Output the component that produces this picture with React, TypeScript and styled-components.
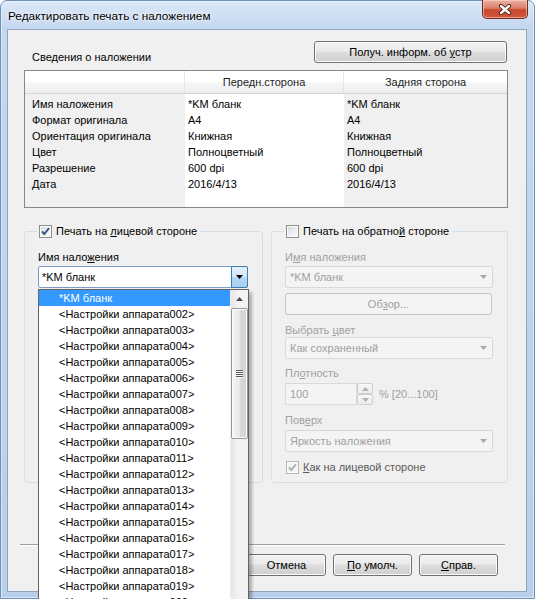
import React from "react";
import styled, { createGlobalStyle } from "styled-components";

const font = `"Liberation Sans", Arial, sans-serif`;
const grayText = "#a0a0a0";

const GlobalStyle = createGlobalStyle`
  html, body {
    margin: 0;
    padding: 0;
    width: 535px;
    height: 599px;
    overflow: hidden;
    background: #ffffff;
  }
  body {
    font-family: ${font};
    font-size: 11px;
    color: #000;
  }
  #root {
    width: 535px;
    height: 599px;
  }
`;

const Window = styled.div`
  width: 535px;
  height: 599px;
  box-sizing: border-box;
  border: 1px solid #6f8fb8;
  border-radius: 7px 7px 0 0;
  background: linear-gradient(to bottom, #dbe8f7 0px, #c4d8f0 26px, #b8cfeb 100%);
  box-shadow: inset 0 0 0 1px rgba(255, 255, 255, 0.45);
  display: flex;
  flex-direction: column;
  padding: 0 7px 6px 6px;
`;

const TitleBar = styled.div`
  height: 28px;
  display: flex;
  align-items: center;
  flex-shrink: 0;
`;

const Title = styled.div`
  padding-left: 1px;
  margin-top: 1px;
  font-size: 11.8px;
  color: #000;
  text-shadow: 0 0 6px #fff, 0 0 3px #fff;
`;

const CloseButton = styled.div`
  margin-left: auto;
  margin-right: -1px;
  align-self: flex-start;
  margin-top: -1px;
  width: 46px;
  height: 19px;
  box-sizing: border-box;
  border: 1px solid #6e2a1c;
  border-top: none;
  border-radius: 0 0 5px 5px;
  background: linear-gradient(to bottom, #eab2a2 0%, #dc7f69 45%, #c8472d 55%, #d0573b 100%);
  box-shadow: inset 0 0 0 1px rgba(255, 220, 210, 0.55);
  display: flex;
  align-items: center;
  justify-content: center;
`;

const Client = styled.div`
  flex: 1;
  background: #f0f0f0;
  border: 1px solid #8ea5c0;
  padding: 0 18px 0 16px;
  display: flex;
  flex-direction: column;
`;

const InfoRow = styled.div`
  display: flex;
  justify-content: space-between;
  margin-top: 11px;
`;

const InfoLabel = styled.div`
  margin-top: 9px;
  padding-left: 8px;
  line-height: 14px;
`;

const Button = styled.div<{ $width: number; $disabled?: boolean }>`
  width: ${(p) => p.$width}px;
  height: 22px;
  box-sizing: border-box;
  border: 1px solid ${(p) => (p.$disabled ? "#c4c4c4" : "#707070")};
  border-radius: 3px;
  background: ${(p) =>
    p.$disabled
      ? "#f4f4f4"
      : "linear-gradient(to bottom, #f2f2f2 0%, #ebebeb 45%, #dddddd 50%, #cfcfcf 100%)"};
  box-shadow: inset 0 0 0 1px ${(p) => (p.$disabled ? "#f4f4f4" : "#fbfbfb")};
  color: ${(p) => (p.$disabled ? grayText : "#000")};
  display: flex;
  align-items: center;
  justify-content: center;
  flex-shrink: 0;
`;

const Mn = styled.span`
  text-decoration: underline;
  text-underline-offset: 1px;
`;

const Table = styled.div`
  margin-top: 6px;
  height: 138px;
  box-sizing: border-box;
  border: 1px solid #828790;
  background: linear-gradient(
    to right,
    #f0f0f0 160px,
    #ffffff 160px,
    #ffffff 319px,
    #f0f0f0 319px
  );
`;

const HeaderRow = styled.div`
  display: grid;
  grid-template-columns: 160px 159px 1fr;
  height: 23px;
  box-sizing: border-box;
  border-bottom: 1px solid #d5d5d5;
  background: linear-gradient(to bottom, #ffffff 0%, #ffffff 45%, #f5f6f7 55%, #eceef0 100%);
`;

const HeaderCell = styled.div`
  border-right: 1px solid #e3e5e8;
  display: flex;
  align-items: center;
  justify-content: center;
  color: #1e1e1e;
  &:last-child {
    border-right: none;
  }
`;

const TableBody = styled.div`
  padding-top: 2px;
`;

const Row = styled.div`
  display: grid;
  grid-template-columns: 160px 159px 1fr;
  height: 16px;
  line-height: 16px;
`;

const Cell = styled.div<{ $pad: number }>`
  padding-left: ${(p) => p.$pad}px;
  white-space: nowrap;
`;

const Groups = styled.div`
  display: grid;
  grid-template-columns: 239px 1fr;
  gap: 8px;
  margin-top: 16px;
`;

const Group = styled.fieldset`
  margin: 0;
  padding: 0 14px 8px 13px;
  border: 1px solid #d5dfe5;
  border-radius: 3px;
  min-width: 0;
  display: flex;
  flex-direction: column;
`;

const Legend = styled.legend`
  padding: 0 3px 0 1px;
  margin-left: -1px;
  line-height: 14px;
`;

const CheckRow = styled.label<{ $disabled?: boolean; $top?: number }>`
  display: flex;
  align-items: center;
  gap: 4px;
  height: 14px;
  margin-top: ${(p) => p.$top ?? 0}px;
  margin-left: 1px;
  color: ${(p) => (p.$disabled ? "#5a5a5a" : "#000")};
  white-space: nowrap;
`;

const Box = styled.span<{ $disabled?: boolean }>`
  width: 13px;
  height: 13px;
  box-sizing: border-box;
  border: 1px solid ${(p) => (p.$disabled ? "#b7b7b7" : "#8e8f8f")};
  background: ${(p) =>
    p.$disabled ? "#f4f4f4" : "linear-gradient(135deg, #d2d4d7 0%, #eeeff0 55%, #fcfcfc 100%)"};
  box-shadow: inset 0 0 0 1px #fbfbfb;
  display: flex;
  align-items: center;
  justify-content: center;
  flex-shrink: 0;
`;

const FieldLabel = styled.div<{ $top: number; $disabled?: boolean }>`
  margin-top: ${(p) => p.$top}px;
  line-height: 14px;
  color: ${(p) => (p.$disabled ? grayText : "#000")};
  white-space: nowrap;
`;

const ComboWrap = styled.div<{ $top: number }>`
  position: relative;
  margin-top: ${(p) => p.$top}px;
`;

const Combo = styled.div<{ $disabled?: boolean; $open?: boolean }>`
  height: 22px;
  box-sizing: border-box;
  border: 1px solid ${(p) => (p.$open ? "#7a9cc6" : p.$disabled ? "#d9d9d9" : "#abadb3")};
  background: ${(p) => (p.$disabled ? "#f4f4f4" : "#fff")};
  color: ${(p) => (p.$disabled ? grayText : "#000")};
  display: flex;
  align-items: stretch;
  border-radius: 2px;
`;

const ComboText = styled.div<{ $pad: number }>`
  flex: 1;
  padding-left: ${(p) => p.$pad}px;
  display: flex;
  align-items: center;
  white-space: nowrap;
`;

const ComboArrow = styled.div<{ $open?: boolean }>`
  width: 17px;
  margin: ${(p) => (p.$open ? "-1px -1px -1px 0" : "0")};
  box-sizing: border-box;
  border: ${(p) => (p.$open ? "1px solid #3c7fb1" : "none")};
  border-radius: 0 2px 2px 0;
  background: ${(p) =>
    p.$open ? "linear-gradient(to bottom, #e3f1fc 0%, #cfe6fa 50%, #b4d8f6 51%, #a5cff2 100%)" : "transparent"};
  display: flex;
  align-items: center;
  justify-content: center;
`;

const DropList = styled.div`
  position: absolute;
  top: calc(100% + 1px);
  left: 0;
  width: 211px;
  height: 340px;
  box-sizing: border-box;
  border: 1px solid #646464;
  background: #fff;
  box-shadow: 3px 3px 3px rgba(0, 0, 0, 0.28);
  display: flex;
  z-index: 5;
`;

const Items = styled.div`
  flex: 1;
  display: flex;
  flex-direction: column;
`;

const Item = styled.div<{ $selected?: boolean }>`
  height: 16px;
  line-height: 16px;
  padding-left: 20px;
  white-space: nowrap;
  background: ${(p) => (p.$selected ? "#3399ff" : "transparent")};
  color: ${(p) => (p.$selected ? "#fff" : "#000")};
`;

const ScrollBar = styled.div`
  width: 17px;
  display: flex;
  flex-direction: column;
  background: linear-gradient(to right, #e6e6e6 0%, #f3f3f3 40%, #f3f3f3 100%);
  border-left: 1px solid #f0f0f0;
`;

const ScrollArrow = styled.div`
  height: 17px;
  display: flex;
  align-items: center;
  justify-content: center;
`;

const Thumb = styled.div`
  margin: 1px 0 0 0;
  height: 131px;
  box-sizing: border-box;
  border: 1px solid #979797;
  border-radius: 2px;
  background: linear-gradient(to right, #f5f5f5 0%, #e9e9e9 50%, #d9d9d9 51%, #d4d4d4 100%);
  box-shadow: inset 0 0 0 1px #fbfbfb;
  display: flex;
  flex-direction: column;
  align-items: center;
  justify-content: center;
  gap: 1px;
`;

const Grip = styled.span`
  width: 7px;
  height: 1px;
  background: #5a5a5a;
  box-shadow: 0 1px 0 #f8f8f8;
`;

const Spin = styled.div`
  display: flex;
  align-items: center;
  margin-top: 3px;
  height: 22px;
`;

const SpinInput = styled.div`
  width: 72px;
  height: 22px;
  box-sizing: border-box;
  border: 1px solid #d9d9d9;
  background: #f4f4f4;
  color: ${grayText};
  padding-left: 4px;
  line-height: 20px;
`;

const SpinButtons = styled.div`
  display: flex;
  flex-direction: column;
  width: 16px;
  height: 22px;
`;

const SpinButton = styled.div`
  flex: 1;
  border: 1px solid #cfcfcf;
  border-radius: 2px;
  background: linear-gradient(to bottom, #f8f8f8, #ececec);
  display: flex;
  align-items: center;
  justify-content: center;
`;

const SpinNote = styled.span`
  margin-left: 6px;
  color: ${grayText};
`;

const Separator = styled.div`
  margin: 61px 3px 0 -4px;
  height: 0;
  border-top: 1px solid #a0a0a0;
  border-bottom: 1px solid #ffffff;
`;

const ButtonRow = styled.div`
  display: flex;
  justify-content: flex-end;
  gap: 7px;
  margin-top: 8px;
  padding-right: 10px;
`;

const Arrow = ({ color, up }: { color: string; up?: boolean }) => (
  <svg width="7" height="4" viewBox="0 0 7 4">
    <path d={up ? "M0 4 L7 4 L3.5 0 Z" : "M0 0 L7 0 L3.5 4 Z"} fill={color} />
  </svg>
);

const Check = ({ color }: { color: string }) => (
  <svg width="11" height="11" viewBox="0 0 11 11">
    <path d="M2 5.5 L4.3 8 L9 2.2" fill="none" stroke={color} strokeWidth="1.9" />
  </svg>
);

const CheckBox = ({ checked, disabled }: { checked?: boolean; disabled?: boolean }) => (
  <Box $disabled={disabled}>{checked && <Check color={disabled ? "#b0b0b0" : "#3b5387"} />}</Box>
);

const infoRows: [string, string, string][] = [
  ["Имя наложения", "*KM бланк", "*KM бланк"],
  ["Формат оригинала", "A4", "A4"],
  ["Ориентация оригинала", "Книжная", "Книжная"],
  ["Цвет", "Полноцветный", "Полноцветный"],
  ["Разрешение", "600 dpi", "600 dpi"],
  ["Дата", "2016/4/13", "2016/4/13"],
];

const presets = Array.from({ length: 20 }, (_, i) => `<Настройки аппарата${String(i + 2).padStart(3, "0")}>`);

export default function App() {
  return (
    <>
      <GlobalStyle />
      <Window>
        <TitleBar>
          <Title>Редактировать печать с наложением</Title>
          <CloseButton>
            <svg width="14" height="11" viewBox="0 0 14 11">
              <path d="M3 2 L11 9 M11 2 L3 9" stroke="#4a1a10" strokeWidth="4.2" strokeLinecap="round" />
              <path d="M3 2 L11 9 M11 2 L3 9" stroke="#ffffff" strokeWidth="2.4" strokeLinecap="round" />
            </svg>
          </CloseButton>
        </TitleBar>
        <Client>
          <InfoRow>
            <InfoLabel>Сведения о наложении</InfoLabel>
            <Button $width={193} style={{ marginRight: 1 }}>
              Получ. информ. об&nbsp;<Mn>у</Mn>стр
            </Button>
          </InfoRow>
          <Table>
            <HeaderRow>
              <HeaderCell />
              <HeaderCell>Передн.сторона</HeaderCell>
              <HeaderCell>Задняя сторона</HeaderCell>
            </HeaderRow>
            <TableBody>
              {infoRows.map(([name, front, back]) => (
                <Row key={name}>
                  <Cell $pad={7}>{name}</Cell>
                  <Cell $pad={3}>{front}</Cell>
                  <Cell $pad={3}>{back}</Cell>
                </Row>
              ))}
            </TableBody>
          </Table>

          <Groups>
            <Group>
              <Legend>
                <CheckRow>
                  <CheckBox checked />
                  <span>
                    Печать на <Mn>л</Mn>ицевой стороне
                  </span>
                </CheckRow>
              </Legend>
              <FieldLabel $top={12}>
                Имя нало<Mn>ж</Mn>ения
              </FieldLabel>
              <ComboWrap $top={2}>
                <Combo $open>
                  <ComboText $pad={3}>*KM бланк</ComboText>
                  <ComboArrow $open>
                    <Arrow color="#000" />
                  </ComboArrow>
                </Combo>
                <DropList>
                  <Items>
                    <Item $selected>*KM бланк</Item>
                    {presets.map((p) => (
                      <Item key={p}>{p}</Item>
                    ))}
                  </Items>
                  <ScrollBar>
                    <ScrollArrow>
                      <Arrow color="#4d4d4d" up />
                    </ScrollArrow>
                    <Thumb>
                      <Grip />
                      <Grip />
                      <Grip />
                      <Grip />
                    </Thumb>
                  </ScrollBar>
                </DropList>
              </ComboWrap>
            </Group>

            <Group>
              <Legend>
                <CheckRow>
                  <CheckBox />
                  <span>
                    Печать на обратно<Mn>й</Mn> стороне
                  </span>
                </CheckRow>
              </Legend>
              <FieldLabel $top={12} $disabled>
                И<Mn>м</Mn>я наложения
              </FieldLabel>
              <ComboWrap $top={2}>
                <Combo $disabled>
                  <ComboText $pad={4}>*KM бланк</ComboText>
                  <ComboArrow>
                    <Arrow color="#a8a8a8" />
                  </ComboArrow>
                </Combo>
              </ComboWrap>
              <Button $width={207} $disabled style={{ marginTop: 5 }}>
                Об<Mn>з</Mn>ор...
              </Button>
              <FieldLabel $top={8} $disabled>
                Выбрать <Mn>ц</Mn>вет
              </FieldLabel>
              <ComboWrap $top={0}>
                <Combo $disabled>
                  <ComboText $pad={4}>Как сохраненный</ComboText>
                  <ComboArrow>
                    <Arrow color="#a8a8a8" />
                  </ComboArrow>
                </Combo>
              </ComboWrap>
              <FieldLabel $top={7} $disabled>
                Пл<Mn>о</Mn>тность
              </FieldLabel>
              <Spin>
                <SpinInput>100</SpinInput>
                <SpinButtons>
                  <SpinButton>
                    <Arrow color="#b0b0b0" up />
                  </SpinButton>
                  <SpinButton>
                    <Arrow color="#b0b0b0" />
                  </SpinButton>
                </SpinButtons>
                <SpinNote>% [20...100]</SpinNote>
              </Spin>
              <FieldLabel $top={8} $disabled>
                Пов<Mn>е</Mn>рх
              </FieldLabel>
              <ComboWrap $top={3}>
                <Combo $disabled>
                  <ComboText $pad={4}>Яркость наложения</ComboText>
                  <ComboArrow>
                    <Arrow color="#a8a8a8" />
                  </ComboArrow>
                </Combo>
              </ComboWrap>
              <CheckRow $disabled $top={8}>
                <CheckBox checked disabled />
                <span>
                  <Mn>К</Mn>ак на лицевой стороне
                </span>
              </CheckRow>
            </Group>
          </Groups>

          <Separator />
          <ButtonRow>
            <Button $width={79}>OK</Button>
            <Button $width={79}>Отмена</Button>
            <Button $width={79}>
              <Mn>П</Mn>о умолч.
            </Button>
            <Button $width={79}>
              <Mn>С</Mn>прав.
            </Button>
          </ButtonRow>
        </Client>
      </Window>
    </>
  );
}
